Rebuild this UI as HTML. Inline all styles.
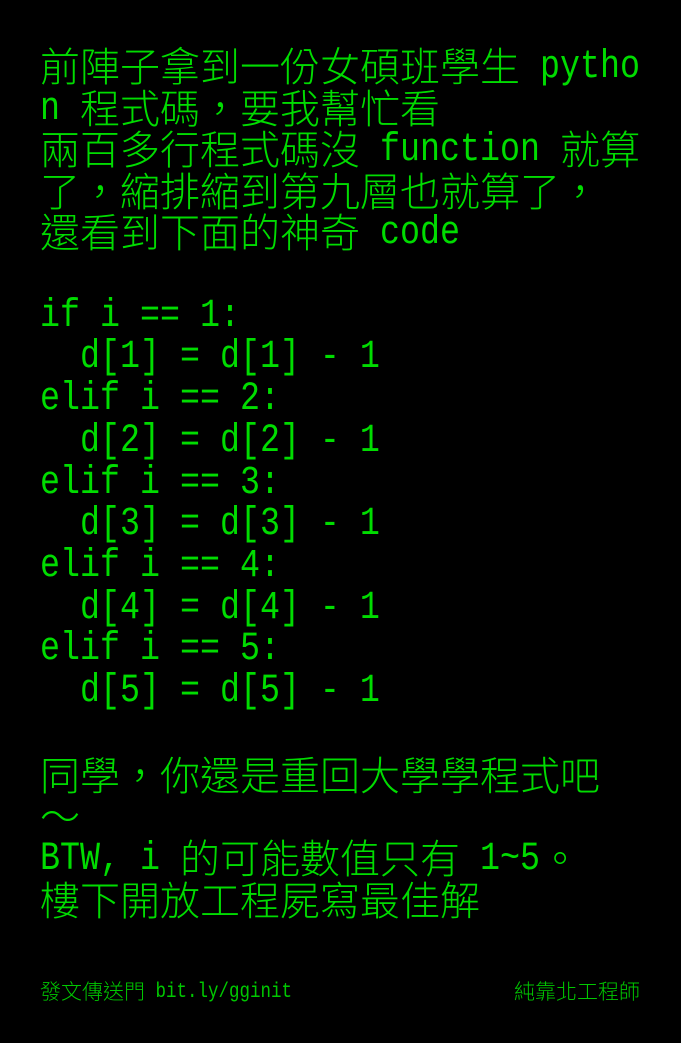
<!DOCTYPE html>
<html><head><meta charset="utf-8"><style>
html,body{margin:0;padding:0;background:#000;}
body{width:681px;height:1043px;position:relative;overflow:hidden;}
.l{position:absolute;left:40px;height:42px;line-height:42px;color:#00dc00;white-space:pre;font-family:"Noto Sans CJK TC","WenQuanYi Zen Hei",sans-serif;font-size:40px;font-weight:300;}
.m{display:inline-block;position:relative;top:4px;font-family:"Liberation Mono",monospace;font-size:40px;font-weight:normal;transform:scaleX(0.833);transform-origin:0 50%;vertical-align:top;}
.c{top:0}
.f{position:absolute;top:979px;height:24px;line-height:24px;color:#00c800;white-space:pre;font-family:"Noto Sans CJK TC",sans-serif;font-size:21px;font-weight:300;}
.f .m{font-size:21px;top:2px;}
</style></head><body>
<div class="l" style="top:43px">前陣子拿到一份女碩班學生<span class="m" style="width:120px"> pytho</span></div>
<div class="l" style="top:85px"><span class="m" style="width:40px">n </span>程式碼，要我幫忙看</div>
<div class="l" style="top:126px">兩百多行程式碼沒<span class="m" style="width:200px"> function </span>就算</div>
<div class="l" style="top:168px">了，縮排縮到第九層也就算了，</div>
<div class="l" style="top:209px">還看到下面的神奇<span class="m" style="width:100px"> code</span></div>
<div class="l" style="top:296px"><span class="m c">if i == 1:</span></div>
<div class="l" style="top:337px"><span class="m c">  d[1] = d[1] - 1</span></div>
<div class="l" style="top:379px"><span class="m c">elif i == 2:</span></div>
<div class="l" style="top:421px"><span class="m c">  d[2] = d[2] - 1</span></div>
<div class="l" style="top:463px"><span class="m c">elif i == 3:</span></div>
<div class="l" style="top:504px"><span class="m c">  d[3] = d[3] - 1</span></div>
<div class="l" style="top:546px"><span class="m c">elif i == 4:</span></div>
<div class="l" style="top:588px"><span class="m c">  d[4] = d[4] - 1</span></div>
<div class="l" style="top:629px"><span class="m c">elif i == 5:</span></div>
<div class="l" style="top:671px"><span class="m c">  d[5] = d[5] - 1</span></div>
<div class="l" style="top:752px">同學，你還是重回大學學程式吧</div>
<div class="l" style="top:793px">～</div>
<div class="l" style="top:835px"><span class="m" style="width:140px">BTW, i </span>的可能數值只有<span class="m" style="width:80px"> 1~5</span>。</div>
<div class="l" style="top:877px">樓下開放工程屍寫最佳解</div>
<div class="f" style="left:40px">發文傳送門<span class="m"> bit.ly/gginit</span></div>
<div class="f" style="right:41px">純靠北工程師</div>
</body></html>
